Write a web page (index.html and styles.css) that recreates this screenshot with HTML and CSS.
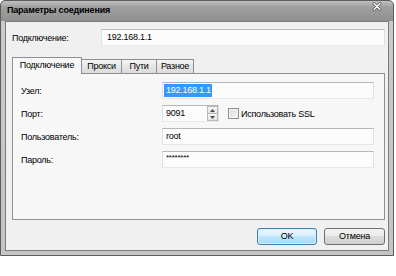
FILE: index.html
```html
<!DOCTYPE html>
<html lang="ru">
<head>
  <meta charset="UTF-8">
  <title>Параметры соединения</title>
  <link rel="stylesheet" href="styles.css">
</head>
<body>

  <div class="window">
    <div class="titlebar">
      <span class="title">Параметры соединения</span>
      <svg class="close" width="10" height="9" viewBox="0 0 10 9">
        <path d="M2 1.5 L8 7.5 M8 1.5 L2 7.5" stroke="#5a5a5a" stroke-width="2.8" stroke-linecap="round"/>
        <path d="M2 1.5 L8 7.5 M8 1.5 L2 7.5" stroke="#ffffff" stroke-width="1.3" stroke-linecap="round"/>
      </svg>
    </div>

    <div class="client">
      <div class="top-row">
        <span class="top-label">Подключение:</span>
        <div class="field top-field">192.168.1.1</div>
      </div>

      <div class="tabs">
        <div class="tab active">Подключение</div>
        <div class="tab tab-proxy">Прокси</div>
        <div class="tab tab-paths">Пути</div>
        <div class="tab tab-misc">Разное</div>
      </div>

      <div class="panel">
        <div class="form">
          <span class="lbl">Узел:</span>
          <div class="field"><span class="selected">192.168.1.1</span></div>

          <span class="lbl">Порт:</span>
          <div class="port-row">
            <div class="spin">
              <span class="spin-value">9091</span>
              <div class="spin-btns">
                <div class="spin-btn">
                  <svg width="5" height="3" viewBox="0 0 5 3"><path d="M0 3 L2.5 0 L5 3 Z" fill="#4d4d4d"/></svg>
                </div>
                <div class="spin-btn">
                  <svg width="5" height="3" viewBox="0 0 5 3"><path d="M0 0 L2.5 3 L5 0 Z" fill="#4d4d4d"/></svg>
                </div>
              </div>
            </div>
            <span class="checkbox"></span>
            <span class="check-label">Использовать SSL</span>
          </div>

          <span class="lbl">Пользователь:</span>
          <div class="field">root</div>

          <span class="lbl">Пароль:</span>
          <div class="field password">********</div>
        </div>
      </div>

      <div class="buttons">
        <div class="btn btn-default">OK</div>
        <div class="btn">Отмена</div>
      </div>
    </div>
  </div>

</body>
</html>
```

FILE: styles.css
```css
* { margin: 0; padding: 0; box-sizing: border-box; }

body {
  background: #ffffff;
  font-family: "Liberation Sans", Arial, sans-serif;
  font-size: 9px;
  letter-spacing: -0.25px;
  color: #000;
}

.window {
  width: 394px;
  height: 256px;
  border: 1px solid #5c5c5c;
  border-radius: 5px 5px 0 0;
  background: linear-gradient(#c0c0c0, #a0a0a0 6px, #8f8f8f 20px, #cbcbcb 20px, #c4c4c4);
  padding: 0 4px 4px;
  display: flex;
  flex-direction: column;
}

.titlebar {
  height: 20px;
  display: flex;
  align-items: center;
  justify-content: space-between;
  padding: 0 7px 2px 2px;
}

.title {
  font-weight: bold;
  font-size: 9px;
  letter-spacing: -0.2px;
}

.close {
  margin-top: -7px;
}

.client {
  flex: 1;
  background: #f0f0f0;
  border: 1px solid #7b7b7b;
  display: flex;
  flex-direction: column;
  padding: 7px 3px 5px 6px;
}

.top-row {
  display: flex;
  align-items: center;
  height: 17px;
}

.top-label {
  width: 89px;
}

.field {
  height: 17px;
  line-height: 15px;
  border: 1px solid;
  border-color: #b5b7bd #dde1e7 #e5e9ee #dde1e7;
  background: #fcfcfc;
  padding: 0 3px;
  white-space: nowrap;
}

.top-field {
  flex: 1;
  padding-left: 5px;
}

.tabs {
  display: flex;
  align-items: flex-end;
  height: 16px;
  margin-top: 11px;
}

.tab {
  height: 14px;
  line-height: 12px;
  border: 1px solid #8d9098;
  border-bottom: none;
  background: linear-gradient(#f4f4f4, #e6e6e6 50%, #dcdcdc);
  text-align: center;
  margin-left: -1px;
}

.tab.active {
  margin-left: 0;
  width: 70px;
  height: 17px;
  line-height: 15px;
  margin-bottom: -1px;
  background: #f7f7f7;
  position: relative;
  z-index: 1;
}

.tab-proxy { width: 41px; }
.tab-paths { width: 36px; }
.tab-misc { width: 38px; }

.panel {
  width: 373px;
  height: 147px;
  border: 1px solid #8d9098;
  background: #f7f7f7;
  padding: 8px 10px 0 8px;
}

.form {
  display: grid;
  grid-template-columns: 141px 212px;
  grid-auto-rows: 17px;
  row-gap: 6px;
  align-items: center;
}

.selected {
  background: #3399ff;
  color: #fff;
  margin-left: -2px;
  padding: 1px 1px 2px 2px;
}

.password {
  font-size: 8px;
  line-height: 12px;
}

.port-row {
  display: flex;
  align-items: center;
  height: 17px;
}

.spin {
  width: 57px;
  height: 17px;
  display: flex;
  border: 1px solid;
  border-color: #b5b7bd #dde1e7 #e5e9ee #dde1e7;
  background: #fcfcfc;
}

.spin-value {
  flex: 1;
  line-height: 15px;
  padding-left: 3px;
}

.spin-btns {
  width: 11px;
  display: flex;
  flex-direction: column;
}

.spin-btn {
  flex: 1;
  border: 1px solid #b9b9b9;
  background: linear-gradient(#f6f6f6, #e3e3e3);
  display: flex;
  align-items: center;
  justify-content: center;
}

.spin-btn + .spin-btn {
  border-top: none;
}

.checkbox {
  width: 11px;
  height: 11px;
  margin-left: 9px;
  border: 1px solid #8f8f8f;
  background: linear-gradient(135deg, #dcdcdc, #f6f6f6);
  box-shadow: inset 0 0 0 1px #f4f4f4;
}

.check-label {
  margin-left: 2px;
}

.buttons {
  display: flex;
  justify-content: flex-end;
  gap: 7px;
  margin-top: 8px;
}

.btn {
  width: 61px;
  height: 17px;
  line-height: 15px;
  text-align: center;
  border: 1px solid #707070;
  border-radius: 3px;
  background: linear-gradient(#f3f3f3, #ebebeb 50%, #dddddd 50%, #cfcfcf);
}

.btn-default {
  width: 60px;
  border-color: #3c7fb1;
  background: linear-gradient(#eaf6fd, #d9effc 50%, #bee6fd 50%, #a7d9f5);
  box-shadow: inset 0 0 0 1px #d8effc;
}
```
